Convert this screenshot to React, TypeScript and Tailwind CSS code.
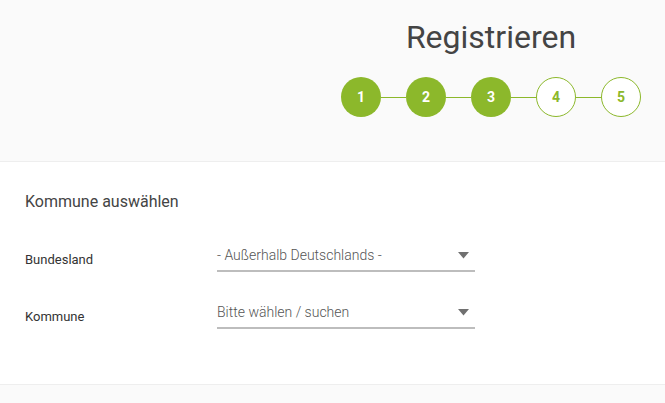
import React from "react";

const steps = [
  { n: 1, done: true },
  { n: 2, done: true },
  { n: 3, done: true },
  { n: 4, done: false },
  { n: 5, done: false },
];

function Select({ value }: { value: string }) {
  return (
    <div className="w-[258px] h-[36px] border-b-2 border-[#bdbdbd] flex items-center justify-between pr-[6px] pt-[4px]">
      <span className="text-[14px] text-[#555] font-light">{value}</span>
      <svg width="11" height="7" viewBox="0 0 11 7">
        <polygon points="0,0 11,0 5.5,6.5" fill="#707070" />
      </svg>
    </div>
  );
}

export default function App() {
  return (
    <div className="w-[665px] h-[403px] bg-[#fafafa] font-['Roboto',sans-serif] overflow-hidden">
      <header className="h-[162px] border-b border-[#eeeeee] flex">
        <div className="flex-1" />
        <div className="w-[348px] flex flex-col items-center pt-[17px]">
          <h1 className="text-[32px] leading-[40px] text-[#444] font-normal">Registrieren</h1>
          <div className="flex items-center mt-[20px]">
            {steps.map((s, i) => (
              <React.Fragment key={s.n}>
                {i > 0 && <div className="w-[25px] h-px bg-[#8cb82b]" />}
                <div
                  className={
                    s.done
                      ? "w-[40px] h-[40px] rounded-full bg-[#8cb82b] text-white flex items-center justify-center text-[14px] font-bold"
                      : "w-[40px] h-[40px] rounded-full border border-[#8cb82b] bg-white text-[#8cb82b] flex items-center justify-center text-[14px] font-bold"
                  }
                >
                  {s.n}
                </div>
              </React.Fragment>
            ))}
          </div>
        </div>
      </header>
      <section className="bg-white h-[223px] border-b border-[#eeeeee] px-[25px] pt-[30px]">
        <h2 className="text-[16px] leading-[20px] text-[#444]">Kommune auswählen</h2>
        <div className="mt-[24px] flex flex-col gap-[21px]">
          <div className="flex items-end">
            <div className="w-[192px] text-[13px] text-[#333] pb-[3px]">Bundesland</div>
            <Select value="- Außerhalb Deutschlands -" />
          </div>
          <div className="flex items-end">
            <div className="w-[192px] text-[13px] text-[#333] pb-[3px]">Kommune</div>
            <Select value="Bitte wählen / suchen" />
          </div>
        </div>
      </section>
    </div>
  );
}
